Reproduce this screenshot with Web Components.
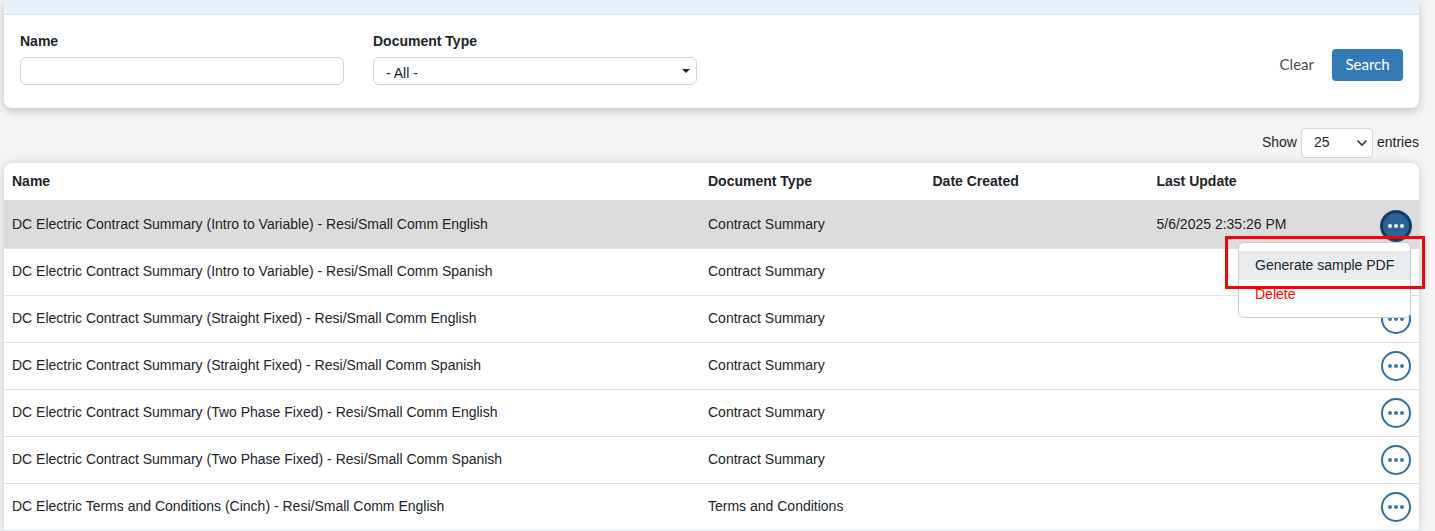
<!DOCTYPE html>
<html>
<head>
<meta charset="utf-8">
<title>Documents</title>
<style>
  html, body { margin: 0; height: 531px; overflow: hidden; }
  body { background: #f4f4f4; font-family: "Liberation Sans", Arial, sans-serif; font-size: 14px; color: #212529; }
</style>
</head>
<body>
<doc-page>
  <filter-card></filter-card>
  <entries-bar></entries-bar>
  <doc-table>
    <doc-row name="DC Electric Contract Summary (Intro to Variable) - Resi/Small Comm English" type="Contract Summary" updated="5/6/2025 2:35:26 PM" active></doc-row>
    <doc-row name="DC Electric Contract Summary (Intro to Variable) - Resi/Small Comm Spanish" type="Contract Summary"></doc-row>
    <doc-row name="DC Electric Contract Summary (Straight Fixed) - Resi/Small Comm English" type="Contract Summary"></doc-row>
    <doc-row name="DC Electric Contract Summary (Straight Fixed) - Resi/Small Comm Spanish" type="Contract Summary"></doc-row>
    <doc-row name="DC Electric Contract Summary (Two Phase Fixed) - Resi/Small Comm English" type="Contract Summary"></doc-row>
    <doc-row name="DC Electric Contract Summary (Two Phase Fixed) - Resi/Small Comm Spanish" type="Contract Summary"></doc-row>
    <doc-row name="DC Electric Terms and Conditions (Cinch) - Resi/Small Comm English" type="Terms and Conditions"></doc-row>
  </doc-table>
</doc-page>

<script>
const COLS = '696px 224.5px 224px 1fr 54px';

class DocPage extends HTMLElement {
    constructor() {
        super();
        this.attachShadow({mode: 'open'}).innerHTML = `
        <style>
        :host { display: block; padding: 0 16px 0 4px; }
        </style>
        <slot></slot>`;
    }
}

class FilterCard extends HTMLElement {
    constructor() {
        super();
        this.attachShadow({mode: 'open'}).innerHTML = `
        <style>
        :host {
            display: block;
            height: 108px;
            box-sizing: border-box;
            background: #fff;
            border-radius: 0 0 8px 8px;
            box-shadow: 0 3px 10px rgba(0,0,0,.2);
        }
        .band { height: 14px; background: #e7f0fd; border-bottom: 1px solid #dee2e6; }
        .body { display: flex; padding: 18px 16px 0; }
        .field { width: 324px; margin-right: 29px; }
        label { display: block; font-weight: bold; font-size: 14px; line-height: 17px; height: 24px; color: #212529; }
        .ctl {
            box-sizing: border-box;
            height: 28px;
            background: #fff;
            border: 1px solid #ced4da;
            border-radius: 6px;
            display: flex;
            align-items: center;
            justify-content: space-between;
            padding: 3px 12px 0;
            font-size: 14px;
        }
        .caret { width: 0; height: 0; border-left: 4px solid transparent; border-right: 4px solid transparent; border-top: 4px solid #212529; margin: -3px -6px 0 0; }
        .actions { margin-left: auto; display: flex; align-items: center; margin-top: 16px; align-self: flex-start; }
        .clear, .search { font-family: Lato, sans-serif; font-size: 15px; padding-bottom: 2px; box-sizing: border-box; }
        .clear { color: #495057; margin-right: 18px; }
        .search { background: #337ab7; color: #fff; width: 71px; height: 32px; border-radius: 4px; display: flex; align-items: center; justify-content: center; }
        </style>
        <div class="band"></div>
        <div class="body">
            <div class="field"><label>Name</label><div class="ctl"></div></div>
            <div class="field"><label>Document Type</label><div class="ctl"><span>- All -</span><span class="caret"></span></div></div>
            <div class="actions"><span class="clear">Clear</span><span class="search">Search</span></div>
        </div>`;
    }
}

class EntriesBar extends HTMLElement {
    constructor() {
        super();
        this.attachShadow({mode: 'open'}).innerHTML = `
        <style>
        :host { display: flex; justify-content: flex-end; align-items: center; gap: 4px; height: 30px; margin: 20px 0 5px; font-size: 14px; color: #212529; }
        .lbl { padding-bottom: 2px; }
        .sel { box-sizing: border-box; width: 72px; height: 30px; background: #fff; border: 1px solid #ced4da; border-radius: 4px; display: flex; align-items: center; justify-content: space-between; padding: 0 4px 0 12px; }
        .sel .lbl { padding-bottom: 2px; }
        svg { display: block; }
        </style>
        <span class="lbl">Show</span>
        <span class="sel"><span class="lbl">25</span><svg width="12" height="8" viewBox="0 0 12 8"><path d="M1.5 1.5 6 6l4.5-4.5" fill="none" stroke="#343a40" stroke-width="1.6"/></svg></span>
        <span class="lbl">entries</span>`;
    }
}

class DocTable extends HTMLElement {
    constructor() {
        super();
        this.attachShadow({mode: 'open'}).innerHTML = `
        <style>
        :host { display: block; position: relative; background: #fff; border-radius: 8px 8px 0 0; box-shadow: 0 0 8px rgba(0,0,0,.16); }
        .head { display: grid; grid-template-columns: ${COLS}; height: 37px; box-sizing: border-box; padding-bottom: 2px; align-items: center; font-weight: bold; font-size: 14px; color: #212529; }
        .head span { padding-left: 8px; }
        .menu {
            position: absolute; left: 1234px; top: 79px; width: 173px; height: 76px; box-sizing: border-box;
            background: #fff; border: 1px solid #ccc; border-radius: 6px; padding: 8px 0; z-index: 2;
        }
        .item { height: 29px; line-height: 29px; padding-left: 16px; font-size: 14px; color: #212529; }
        .item.on { background: #e9ecef; }
        .item.del { color: #f00; }
        .mark { position: absolute; left: 1221px; top: 73px; width: 200px; height: 53px; box-sizing: border-box; border: 3.5px solid #f00; z-index: 3; }
        </style>
        <div class="head"><span>Name</span><span>Document Type</span><span>Date Created</span><span>Last Update</span><span></span></div>
        <slot></slot>
        <div class="menu"><div class="item on">Generate sample PDF</div><div class="item del">Delete</div></div>
        <div class="mark"></div>`;
    }
}

class DocRow extends HTMLElement {
    constructor() {
        super();
        this.attachShadow({mode: 'open'});
    }

    connectedCallback() {
        const a = n => this.getAttribute(n) || '';
        this.shadowRoot.innerHTML = `
        <style>
        :host { display: grid; grid-template-columns: ${COLS}; height: 47px; padding-bottom: 2px; box-sizing: border-box; align-items: center; font-size: 14px; color: #212529; border-bottom: 1px solid #dee2e6; }
        :host([active]) { height: 49px; background: linear-gradient(#dcdcdc 48px, #fff 48px); padding-bottom: 0; }
        span { padding-left: 8px; white-space: nowrap; }
        .btn { box-sizing: border-box; justify-self: end; margin: 2px 8px 0 0; width: 30px; height: 30px; border-radius: 50%; border: 2px solid #2f6ea5; display: flex; align-items: center; justify-content: center; gap: 1.6px; background: #fff; }
        .btn i { width: 4px; height: 4px; border-radius: 50%; background: #337ab7; }
        :host([active]) .btn { margin-top: 3px; background: #2a6496; border-color: #17375a; box-shadow: 0 0 0 1px #1f4a70; }
        :host([active]) .btn i { background: #fff; }
        </style>
        <span>${a('name')}</span><span>${a('type')}</span><span></span><span>${a('updated')}</span>
        <div class="btn"><i></i><i></i><i></i></div>`;
    }
}

customElements.define('doc-page', DocPage);
customElements.define('filter-card', FilterCard);
customElements.define('entries-bar', EntriesBar);
customElements.define('doc-table', DocTable);
customElements.define('doc-row', DocRow);
</script>
</body>
</html>
